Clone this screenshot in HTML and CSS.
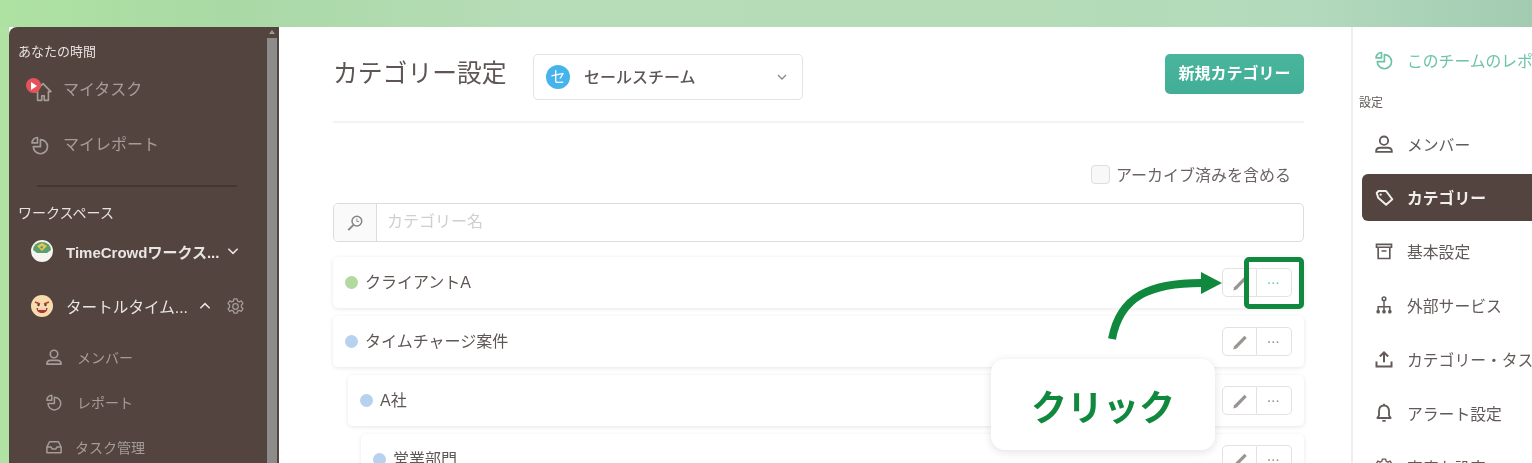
FILE: index.html
```html
<!DOCTYPE html>
<html lang="ja">
<head>
<meta charset="utf-8">
<title>カテゴリー設定</title>
<link rel="stylesheet" href="styles.css">
</head>
<body>
<svg class="defs" aria-hidden="true">
  <symbol id="i-report" viewBox="0 0 24 24"><path d="M12.500 5.500A8.500 8.500 0 1 1 4 14h8.500z M9 3A6.500 6.500 0 0 0 2.500 9.500H9z" fill="none" stroke="currentColor" stroke-width="2" stroke-linejoin="round"/></symbol>
  <symbol id="i-person" viewBox="0 0 24 24"><circle cx="12" cy="8" r="5" fill="none" stroke="currentColor" stroke-width="2.200"/><path d="M2.500 21.500c0-3 2-5 5-5h9c3 0 5 2 5 5z" fill="none" stroke="currentColor" stroke-width="2.200" stroke-linejoin="round"/></symbol>
  <symbol id="i-tag" viewBox="0 0 24 24"><path d="M3 6.500 5 4l9-.5 8 9.500-7 7-10-8z" transform="rotate(3 12 12)" fill="none" stroke="currentColor" stroke-width="2.400" stroke-linejoin="round"/><circle cx="8" cy="8" r="1.300" fill="currentColor"/></symbol>
  <symbol id="i-box" viewBox="0 0 24 24"><path d="M3 4h18v3.500H3z M5 7.500V21h14V7.500 M9 12h6" fill="none" stroke="currentColor" stroke-width="2"/></symbol>
  <symbol id="i-tree" viewBox="0 0 24 24"><circle cx="12" cy="4.500" r="2.200" fill="none" stroke="currentColor" stroke-width="1.800"/><path d="M12 7v12 M5 19v-5h14v5" fill="none" stroke="currentColor" stroke-width="1.800"/><circle cx="5" cy="20" r="2.200" fill="currentColor"/><circle cx="12" cy="20" r="2.200" fill="currentColor"/><circle cx="19" cy="20" r="2.200" fill="currentColor"/></symbol>
  <symbol id="i-upload" viewBox="0 0 24 24"><path d="M12 16V4 M7 9l5-5 5 5 M3 15v6h18v-6" fill="none" stroke="currentColor" stroke-width="2.400"/></symbol>
  <symbol id="i-bell" viewBox="0 0 24 24"><path d="M12 3c-4 0-6 3-6 7v5l-2 3h16l-2-3v-5c0-4-2-7-6-7z M10 21.500h4 M12 1v2" fill="none" stroke="currentColor" stroke-width="2.200" stroke-linejoin="round"/></symbol>
  <symbol id="i-gear" viewBox="0 0 24 24"><circle cx="12" cy="12" r="3.500" fill="none" stroke="currentColor" stroke-width="1.600"/><path d="M10 2.500h4l.6 2.700 2.300 1 2.400-1.400 2.200 3.400-2 1.800v3l2 1.800-2.200 3.400-2.400-1.400-2.300 1-.6 2.700h-4l-.6-2.700-2.300-1-2.400 1.400-2.200-3.400 2-1.800v-3l-2-1.800 2.200-3.400 2.400 1.400 2.300-1z" fill="none" stroke="currentColor" stroke-width="1.600" stroke-linejoin="round"/></symbol>
  <symbol id="i-inbox" viewBox="0 0 24 24"><path d="M2.500 12 6 5h12l3.500 7v7.500h-19z M2.500 12H8l1.500 2.500h5L16 12h5.500" fill="none" stroke="currentColor" stroke-width="2" stroke-linejoin="round"/></symbol>
  <symbol id="i-home" viewBox="0 0 24 24"><path d="M12 2 2.500 11.500h3V22h5v-5.500h3V22h5V11.500h3z" fill="none" stroke="currentColor" stroke-width="2" stroke-linejoin="round"/></symbol>
  <symbol id="i-search" viewBox="0 0 24 24"><circle cx="14.500" cy="9.500" r="6.500" fill="none" stroke="currentColor" stroke-width="2"/><path d="M10 14.500 3 21.500" stroke="currentColor" stroke-width="2.600" fill="none"/><path d="M14.500 6v4h3" stroke="currentColor" stroke-width="1.200" fill="none"/></symbol>
  <symbol id="i-pencil" viewBox="0 0 24 24"><path d="M3 22l1.200-4.500L18 3.500l3 3L7.500 20.500z" fill="currentColor"/></symbol>
  <symbol id="i-chev" viewBox="0 0 24 24"><path d="M4 8l8 8 8-8" fill="none" stroke="currentColor" stroke-width="2.600"/></symbol>
</svg>

<div class="band"></div>
<div class="app">
  <aside class="sidebar">
    <div class="side-scroll">
      <h2 class="side-head">あなたの時間</h2>
      <a class="side-main side-task">
        <span class="side-ico"><svg class="ico-home"><use href="#i-home"/></svg><span class="rec"></span></span>マイタスク
      </a>
      <a class="side-main side-report"><span class="side-ico"><svg class="ico-20"><use href="#i-report"/></svg></span>マイレポート</a>
      <hr class="side-rule">
      <h2 class="side-head side-head-ws">ワークスペース</h2>
      <div class="ws ws-first">
        <span class="ws-avatar ws-avatar-tc"><svg viewBox="0 0 22 22"><circle cx="11" cy="11" r="11" fill="#f4f4f0"/><path d="M2 10a9 8 0 0 1 18 0l-4 3H6z" fill="#5e9e6a"/><path d="M6 6l5-3 5 3-5 5z" fill="#e2c94c"/><path d="M9 7l3-1-1 3z" fill="#3b7fc4"/></svg></span>
        <span class="ws-name ws-name-bold">TimeCrowdワークス...</span>
        <svg class="ws-chev"><use href="#i-chev"/></svg>
      </div>
      <div class="ws ws-second">
        <span class="ws-avatar"><svg viewBox="0 0 22 22"><circle cx="11" cy="11" r="11" fill="#f8dcae"/><path d="M4 7l5 2M18 7l-5 2" stroke="#b0462f" stroke-width="1.800"/><circle cx="7.500" cy="10" r="1.200" fill="#5b3a2c"/><circle cx="14.500" cy="10" r="1.200" fill="#5b3a2c"/><path d="M5.500 13h11c0 3-2.500 5-5.500 5s-5.500-2-5.500-5z" fill="#a8392a"/><path d="M7 13.200h8v1.500H7z" fill="#fff"/></svg></span>
        <span class="ws-name">タートルタイム...</span>
        <svg class="ws-chev ws-chev-up"><use href="#i-chev"/></svg>
        <svg class="ws-gear"><use href="#i-gear"/></svg>
      </div>
      <a class="side-sub side-sub-first"><svg class="ico-18"><use href="#i-person"/></svg>メンバー</a>
      <a class="side-sub"><svg class="ico-18"><use href="#i-report"/></svg>レポート</a>
      <a class="side-sub side-sub-tight"><svg class="ico-18"><use href="#i-inbox"/></svg>タスク管理</a>
    </div>
    <div class="scrollbar"><span class="scroll-up"></span><span class="scroll-thumb"></span></div>
  </aside>

  <main class="main">
    <header class="head">
      <h1 class="title">カテゴリー設定</h1>
      <div class="team-select">
        <span class="team-badge">セ</span>
        <span class="team-name">セールスチーム</span>
        <svg class="team-chev"><use href="#i-chev"/></svg>
      </div>
      <button class="btn-new">新規カテゴリー</button>
    </header>
    <div class="archive">
      <span class="check"></span>
      <span>アーカイブ済みを含める</span>
    </div>
    <div class="search">
      <span class="search-addon"><svg class="ico-18"><use href="#i-search"/></svg></span>
      <span class="search-input">カテゴリー名</span>
    </div>
    <ul class="rows">
      <li class="row">
        <span class="dot dot-green"></span><span class="row-name">クライアントA</span>
        <span class="btns"><span class="b b-l"><svg class="ico-18"><use href="#i-pencil"/></svg></span><span class="b b-r b-hi">···</span></span>
      </li>
      <li class="row">
        <span class="dot"></span><span class="row-name">タイムチャージ案件</span>
        <span class="btns"><span class="b b-l"><svg class="ico-18"><use href="#i-pencil"/></svg></span><span class="b b-r">···</span></span>
      </li>
      <li class="row row-l1">
        <span class="dot"></span><span class="row-name">A社</span>
        <span class="btns"><span class="b b-l"><svg class="ico-18"><use href="#i-pencil"/></svg></span><span class="b b-r">···</span></span>
      </li>
      <li class="row row-l2">
        <span class="dot"></span><span class="row-name">営業部門</span>
        <span class="btns"><span class="b b-l"><svg class="ico-18"><use href="#i-pencil"/></svg></span><span class="b b-r">···</span></span>
      </li>
    </ul>
  </main>

  <nav class="right">
    <a class="r-item r-report"><svg class="ico-20"><use href="#i-report"/></svg>このチームのレポート</a>
    <h2 class="r-head">設定</h2>
    <a class="r-item"><svg class="ico-20"><use href="#i-person"/></svg>メンバー</a>
    <a class="r-item r-active"><svg class="ico-20"><use href="#i-tag"/></svg>カテゴリー</a>
    <a class="r-item"><svg class="ico-20"><use href="#i-box"/></svg>基本設定</a>
    <a class="r-item"><svg class="ico-20"><use href="#i-tree"/></svg>外部サービス</a>
    <a class="r-item"><svg class="ico-20"><use href="#i-upload"/></svg>カテゴリー・タスクのインポート</a>
    <a class="r-item"><svg class="ico-20"><use href="#i-bell"/></svg>アラート設定</a>
    <a class="r-item"><svg class="ico-20"><use href="#i-gear"/></svg>高度な設定</a>
  </nav>
</div>

<div class="hilite"></div>
<svg class="arrow" viewBox="0 0 120 72"><path d="M4 71C12 28 42 15 94 15" fill="none" stroke="#10893e" stroke-width="8"/><path d="M93 4l21 11-21 11z" fill="#10893e"/></svg>
<div class="callout">クリック</div>
</body>
</html>
```

FILE: styles.css
```css
* { box-sizing: border-box; }
html, body { margin: 0; height: 463px; overflow: hidden; }
body {
  position: relative;
  display: flex;
  flex-direction: column;
  font-family: "Liberation Sans", "Noto Sans CJK JP", sans-serif;
  color: #5a5250;
  background: #b0e2a4;
  filter: blur(.35px);
}
.defs { position: absolute; width: 0; height: 0; }
a { display: flex; align-items: center; }
h1, h2, ul { margin: 0; padding: 0; font-weight: 400; }
.ico-18 { width: 18px; height: 18px; flex: none; }
.ico-20 { width: 20px; height: 20px; flex: none; }

.band {
  height: 27px;
  flex: none;
  background: linear-gradient(90deg, #aee2a2 0%, #a9d9a5 15%, #b7dcb8 35%, #b5dcb6 65%, #b3dabc 85%, #a2cbb2 100%);
}
.app { flex: 1; display: flex; margin-left: 9px; min-height: 0; background: #fff; }

/* sidebar */
.sidebar {
  width: 270px;
  flex: none;
  display: flex;
  background: #53443f;
  border-radius: 8px 0 0 0;
  overflow: hidden;
}
.side-scroll { flex: 1; min-width: 0; padding-top: 16px; color: #a59c98; }
.side-head { margin-left: 9px; font-size: 13px; line-height: 18px; color: #e6e1df; }
.side-head-ws { margin-top: 17px; font-size: 14px; }
.side-main { padding-left: 19px; font-size: 16px; line-height: 24px; gap: 11px; }
.side-task { margin-top: 10px; height: 38px; }
.side-report { margin-top: 12px; height: 48px; }
.side-ico { position: relative; display: flex; width: 24px; height: 24px; align-items: center; justify-content: center; }
.ico-home { width: 20px; height: 20px; flex: none; margin: 3px 0 0 6px; }
.rec {
  position: absolute; left: -2px; top: 0;
  width: 15px; height: 15px; border-radius: 50%;
  background: #e5525a;
}
.rec::after {
  content: ""; position: absolute; left: 5px; top: 3.500px;
  border-left: 6px solid #fff; border-top: 4px solid transparent; border-bottom: 4px solid transparent;
}
.side-rule { margin: 16px 30px 0 28px; border: 0; border-top: 2px solid #443632; }
.ws { display: flex; align-items: center; height: 54px; padding-left: 22px; color: #e9e5e3; }
.ws-first { margin-top: 2px; }
.ws-second { margin-top: 1px; }
.ws-avatar { width: 22px; height: 22px; flex: none; }
.ws-avatar svg { display: block; width: 22px; height: 22px; }
.ws-name { margin-left: 13px; font-size: 15.600px; white-space: nowrap; }
.ws-name-bold { font-size: 15px; font-weight: 700; margin-right: 7px; }
.ws-chev { width: 14px; height: 14px; }
.ws-chev-up { transform: rotate(180deg); margin-left: 10px; }
.ws-gear { width: 19px; height: 19px; margin-left: 14px; color: #a59c98; }
.side-sub { height: 45px; padding-left: 36px; font-size: 14px; gap: 14px; }
.side-sub-first { margin-top: 1px; }
.side-sub-tight { gap: 12px; }
.scrollbar { width: 12px; flex: none; display: flex; flex-direction: column; align-items: center; padding-right: 2px; }
.scroll-up { margin-top: 3px; border-bottom: 4px solid #a09a97; border-left: 3px solid transparent; border-right: 3px solid transparent; }
.scroll-thumb { margin-top: 4px; width: 10px; flex: 1; background: #8c8c8a; }

/* main */
.main { width: 1072px; flex: none; padding: 27px 47px 0 54px; overflow: hidden; }
.head {
  display: flex;
  align-items: flex-start;
  height: 69px;
  border-bottom: 2px solid #f3f3f3;
}
.title { margin-top: 1px; font-size: 24.800px; line-height: 38px; color: #5e5654; width: 200px; flex: none; }
.team-select {
  width: 270px; height: 46px;
  display: flex; align-items: center;
  padding: 0 14px 0 12px;
  border: 1px solid #e3e3e3;
  border-radius: 5px;
}
.team-badge {
  width: 24px; height: 24px; border-radius: 50%;
  background: #45b4ec; color: #fff; font-size: 15px; line-height: 24px; text-align: center;
}
.team-name { margin-left: 14px; padding-bottom: 2px; font-size: 16px; font-weight: 500; color: #5d5553; flex: 1; }
.team-chev { width: 12px; height: 12px; color: #8d8785; }
.btn-new {
  margin-left: auto;
  width: 139px; height: 40px;
  padding: 0 0 4px;
  border: 0; border-radius: 5px;
  background: linear-gradient(180deg, #48b59c, #43ae97);
  color: #fff; font: 700 16px "Noto Sans CJK JP", sans-serif;
}
.archive {
  display: flex; align-items: center; justify-content: flex-end; gap: 6px;
  height: 20px; margin-top: 41px; padding-right: 13px;
  font-size: 16px; color: #6b6462;
}
.check { width: 19px; height: 19px; border: 1px solid #dedede; border-radius: 4px; background: #f8f8f8; }
.search {
  display: flex; height: 39px; margin-top: 19px;
  border: 1px solid #dcdcdc; border-radius: 5px; overflow: hidden;
}
.search-addon {
  width: 43px; display: flex; align-items: center; justify-content: center;
  background: #fafafa; border-right: 1px solid #dcdcdc; color: #8a8482;
}
.search-input { padding-left: 10px; font-size: 16px; line-height: 35px; color: #cfcfcf; }
.rows { list-style: none; margin-top: 15px; }
.row {
  display: flex; align-items: center;
  height: 51px; margin-bottom: 8px;
  padding: 0 12px;
  background: #fff;
  border-radius: 5px;
  box-shadow: 0 1px 4px rgba(0,0,0,.1);
  font-size: 16px;
  color: #5f5755;
}
.row-l1 { margin-left: 15px; }
.row-l2 { margin-left: 28px; }
.dot { width: 13px; height: 13px; border-radius: 50%; background: #b6d2ef; flex: none; }
.dot-green { background: #b2d99f; }
.row-name { margin-left: 7px; padding-bottom: 3px; }
.btns { margin-left: auto; display: flex; height: 29px; }
.b {
  width: 35px; display: flex; align-items: center; justify-content: center;
  border: 1px solid #e2e2e2; color: #9a9492; font-size: 11px; font-weight: 700; letter-spacing: .6px;
}
.b-l { border-radius: 5px 0 0 5px; }
.b-r { border-left: 0; border-radius: 0 5px 5px 0; }
.b-hi { color: #7fc9b4; }

/* right */
.right { flex: 1; min-width: 0; border-left: 2px solid #eee; color: #615a58; overflow: hidden; }
.r-item {
  height: 54px; padding-left: 21px; gap: 13px;
  font-size: 15.800px; white-space: nowrap;
}
.r-report { height: 46px; margin-top: 10px; color: #6cc3a8; }
.r-head { margin: 10px 0 4px 6px; font-size: 12px; line-height: 20px; color: #615a58; }
.r-active {
  margin-left: 9px; padding-left: 12px; height: 47px;
  margin-top: 3px; margin-bottom: 3px;
  border-radius: 6px 0 0 6px;
  background: #53443f; color: #f1eeed; font-weight: 700;
}

/* annotation overlay */
.hilite {
  position: absolute; left: 1244px; top: 257px;
  width: 60px; height: 52px;
  border: 5px solid #10893e; border-radius: 5px;
}
.arrow { position: absolute; left: 1108px; top: 268px; width: 120px; height: 72px; }
.callout {
  position: absolute; left: 991px; top: 359px;
  width: 224px; height: 91px;
  display: flex; align-items: center; justify-content: center;
  background: #fff; border-radius: 14px;
  box-shadow: 0 2px 10px rgba(0,0,0,.12);
  color: #10893e; font-size: 36px; font-weight: 700;
}
```
